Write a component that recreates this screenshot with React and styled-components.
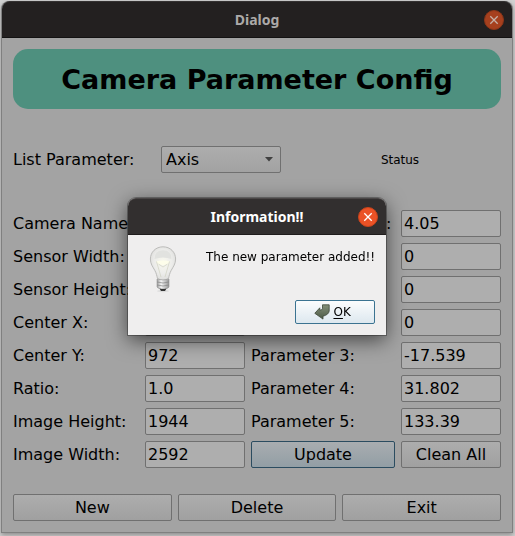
import React from "react";
import styled, { createGlobalStyle } from "styled-components";

const GlobalStyle = createGlobalStyle`
  *, *::before, *::after { box-sizing: border-box; }
  body {
    margin: 0;
    background: #d2d2d2;
    color: #000;
    font: 16px/20px "DejaVu Sans", sans-serif;
  }
`;

const Window = styled.main`
  margin: 1px 2px 3px 1px;
  border: 1px solid #808080;
  border-top-width: 0;
  border-radius: 8px 8px 0 0;
  background: #a3a3a3;
  box-shadow: 0 2px 5px rgba(0, 0, 0, 0.35);
`;

const TitleBar = styled.header`
  display: grid;
  grid-template-columns: 28px 1fr 28px;
  align-items: center;
  height: 37px;
  padding: 0 4px;
  border-radius: 8px 8px 0 0;
  border-top: 1px solid ${(p) => (p.$active ? "#4a4646" : "#343131")};
  border-bottom: 1px solid ${(p) => (p.$active ? "#1f1c1c" : "#131212")};
  background: ${(p) => (p.$active ? "#322f2f" : "#232020")};
  color: ${(p) => (p.$active ? "#fff" : "#acaaa9")};
`;

const TitleText = styled.h2`
  grid-column: 2;
  margin: 0;
  text-align: center;
  font: bold 14px/18px "Noto Sans", sans-serif;
`;

const CloseButton = styled.button`
  justify-self: center;
  display: grid;
  place-items: center;
  width: 20px;
  height: 20px;
  padding: 0;
  border: 1px solid ${(p) => (p.$active ? "#c8431b" : "#8c3518")};
  border-radius: 50%;
  background: ${(p) => (p.$active ? "#eb5226" : "#a6401e")};
  color: ${(p) => (p.$active ? "#fff" : "#c5b1a9")};
`;

const Content = styled.div`
  padding: 11px;
`;

const Banner = styled.h1`
  margin: 0;
  padding: 15px 14px 13px;
  border-radius: 15px;
  background: #4e907f;
  text-align: center;
  font-size: 27px;
  line-height: 32px;
`;

const FilterRow = styled.div`
  display: grid;
  grid-template-columns: 142px 120px 1fr;
  gap: 6px;
  align-items: center;
  margin: 37px 0;
`;

const SelectBox = styled.div`
  position: relative;
`;

const Select = styled.select`
  appearance: none;
  display: block;
  width: 100%;
  height: 27px;
  padding: 0 24px 0 4px;
  border: 1px solid #707070;
  border-radius: 2px;
  background: linear-gradient(#adadad, #a2a2a2);
  color: #000;
  font: inherit;
`;

const SelectArrow = styled.svg`
  position: absolute;
  top: 11px;
  right: 8px;
  pointer-events: none;
`;

const Status = styled.output`
  justify-self: center;
  margin-left: 12px;
  font-size: 12px;
  line-height: 18px;
`;

const Form = styled.form`
  display: grid;
  grid-template-columns: 126px 1fr 144px 1fr;
  grid-auto-rows: 27px;
  gap: 6px;
`;

const Label = styled.label`
  align-self: center;
  white-space: nowrap;
`;

const Field = styled.input`
  width: 100%;
  min-width: 0;
  height: 27px;
  padding: 0 2px;
  border: 1px solid #707070;
  border-radius: 2px;
  background: #aeaeae;
  color: #000;
  font: inherit;
`;

const Button = styled.button`
  display: block;
  height: 27px;
  padding: 0;
  border: 1px solid ${(p) => (p.$primary ? "#2b4c60" : "#707070")};
  border-radius: 2px;
  background: ${(p) =>
    p.$primary
      ? "linear-gradient(#a9adb0, #929ea5)"
      : "linear-gradient(#adadad, #a0a0a0)"};
  color: #000;
  font: inherit;
`;

const Actions = styled.div`
  display: grid;
  grid-template-columns: repeat(3, 1fr);
  gap: 6px;
  margin-top: 26px;
`;

const Overlay = styled.div`
  position: fixed;
  inset: 0;
  display: flex;
  align-items: center;
  justify-content: center;
  padding: 0 1px 3px 0;
`;

const MessageBox = styled.section`
  width: 258px;
  border-radius: 8px 8px 0 0;
  background: #efeeee;
  box-shadow: 0 0 0 1px rgba(0, 0, 0, 0.3), 0 5px 20px rgba(0, 0, 0, 0.6);
`;

const MessageBody = styled.div`
  display: grid;
  grid-template-columns: 48px 1fr;
  column-gap: 19px;
  padding: 11px;
`;

const BulbIcon = styled.svg`
  justify-self: center;
`;

const Message = styled.p`
  margin: 2px 0 0;
  white-space: nowrap;
  font-size: 12px;
  line-height: 18px;
`;

const OkButton = styled.button`
  grid-column: 2;
  justify-self: end;
  display: flex;
  align-items: center;
  justify-content: center;
  gap: 3px;
  width: 80px;
  height: 24px;
  margin-top: 6px;
  padding: 0 5px 0 0;
  border: 1px solid #3b7391;
  border-radius: 2px;
  background: linear-gradient(#fbfcfd, #dde8ef);
  color: #000;
  font: inherit;
  font-size: 12px;
  line-height: 18px;
`;

const Mnemonic = styled.span`
  text-decoration: underline;
  text-underline-offset: 2px;
`;

function Close({ active }) {
  return (
    <CloseButton type="button" aria-label="Close" $active={active}>
      <svg width="10" height="10" viewBox="0 0 10 10" aria-hidden="true">
        <path d="M1.3 1.3 8.7 8.7M8.7 1.3 1.3 8.7" stroke="currentColor" strokeWidth="1.3" fill="none" />
      </svg>
    </CloseButton>
  );
}

function Bulb() {
  return (
    <BulbIcon width="30" height="48" viewBox="0 0 30 48" aria-hidden="true">
      <defs>
        <radialGradient id="glass" cx="0.5" cy="0.45" r="0.6">
          <stop offset="0" stopColor="#f8f8ee" />
          <stop offset="0.6" stopColor="#ececea" />
          <stop offset="1" stopColor="#dadad8" />
        </radialGradient>
        <linearGradient id="metal">
          <stop offset="0" stopColor="#9a9a9a" />
          <stop offset="0.35" stopColor="#f4f4f4" />
          <stop offset="0.7" stopColor="#c0c0c0" />
          <stop offset="1" stopColor="#949494" />
        </linearGradient>
      </defs>
      <ellipse cx="15" cy="45" rx="6" ry="1.2" fill="#dcdcdc" />
      <path
        d="M15 .8C7.600.8 2.400 6.300 2.400 13c0 5 2.400 7.700 4.400 11.400 1.500 2.700 2 5.200 2.700 8.100Q15 36 20.500 32.500c.7-2.900 1.200-5.400 2.700-8.100 2-3.700 4.400-6.400 4.400-11.400C27.600 6.300 22.400.8 15 .8Z"
        fill="url(#glass)"
        stroke="#bcbcba"
      />
      <path d="M6.500 13Q6.500 4.500 15 4.300 23.500 4.500 23.500 13 15 10 6.500 13Z" fill="#e1e2df" />
      <path d="M8 15.500q7-2 14 0-1.500 3.500-7 3.500t-7-3.500Z" fill="#fdfdea" />
      <path d="M8.500 15.500 13 31M21.500 15.500 17 31M10.500 18l4.500 3 4.500-3" fill="none" stroke="#d0d1c2" strokeWidth="0.7" />
      <path d="M9 33q6 2 12 0v8q-1 2-6 2t-6-2Z" fill="url(#metal)" stroke="#999" strokeWidth="0.6" />
      <path d="M9 36q6 2 12 0M9 39q6 2 12 0" fill="none" stroke="#858585" strokeWidth="0.7" />
      <path d="M11.500 42.500q3.500 1 7 0l-1.500 2.500h-4Z" fill="#333" />
    </BulbIcon>
  );
}

function ReturnArrow() {
  return (
    <svg width="16" height="16" viewBox="0 0 16 16" aria-hidden="true">
      <defs>
        <linearGradient id="arrow" x1="0" y1="0" x2="0" y2="1">
          <stop offset="0" stopColor="#84907a" />
          <stop offset="1" stopColor="#4c5945" />
        </linearGradient>
      </defs>
      <path
        d="M8.500.8h6.700v6.200q-.6 3.800-6.200 5.200v2.900L.8 9.300 5.800 3.800v2.400q2.500-.2 2.700-1.800Z"
        fill="url(#arrow)"
        stroke="#3c4637"
        strokeWidth="0.8"
        strokeLinejoin="round"
      />
    </svg>
  );
}

const ROWS = [
  ["Camera Name:", "", "Focal Length (m):", "4.05"],
  ["Sensor Width:", "", "Skew:", "0"],
  ["Sensor Height:", "", "Parameter 1:", "0"],
  ["Center X:", "", "Parameter 2:", "0"],
  ["Center Y:", "972", "Parameter 3:", "-17.539"],
  ["Ratio:", "1.0", "Parameter 4:", "31.802"],
  ["Image Height:", "1944", "Parameter 5:", "133.39"],
];

function LabelledField({ id, label, value }) {
  return (
    <>
      <Label htmlFor={id}>{label}</Label>
      <Field id={id} defaultValue={value} />
    </>
  );
}

export default function App() {
  return (
    <>
      <GlobalStyle />
      <Window>
        <TitleBar>
          <TitleText>Dialog</TitleText>
          <Close />
        </TitleBar>
        <Content>
          <Banner>Camera Parameter Config</Banner>
          <FilterRow>
            <Label htmlFor="list">List Parameter:</Label>
            <SelectBox>
              <Select id="list" defaultValue="Axis">
                <option>Axis</option>
              </Select>
              <SelectArrow width="8" height="5" viewBox="0 0 8 5" aria-hidden="true">
                <path d="M0 0H8L4 4.500Z" fill="#404040" />
              </SelectArrow>
            </SelectBox>
            <Status>Status</Status>
          </FilterRow>
          <Form onSubmit={(e) => e.preventDefault()}>
            {ROWS.map(([left, leftValue, right, rightValue], i) => (
              <React.Fragment key={left}>
                <LabelledField id={`left-${i}`} label={left} value={leftValue} />
                <LabelledField id={`right-${i}`} label={right} value={rightValue} />
              </React.Fragment>
            ))}
            <LabelledField id="image-width" label="Image Width:" value="2592" />
            <Button type="submit" $primary>Update</Button>
            <Button type="reset">Clean All</Button>
          </Form>
          <Actions>
            <Button type="button">New</Button>
            <Button type="button">Delete</Button>
            <Button type="button">Exit</Button>
          </Actions>
        </Content>
      </Window>
      <Overlay>
        <MessageBox role="alertdialog" aria-modal="true" aria-labelledby="message-title" aria-describedby="message-text">
          <TitleBar $active>
            <TitleText id="message-title">Information!!</TitleText>
            <Close active />
          </TitleBar>
          <MessageBody>
            <Bulb />
            <Message id="message-text">The new parameter added!!</Message>
            <OkButton type="button">
              <ReturnArrow />
              <span><Mnemonic>O</Mnemonic>K</span>
            </OkButton>
          </MessageBody>
        </MessageBox>
      </Overlay>
    </>
  );
}
